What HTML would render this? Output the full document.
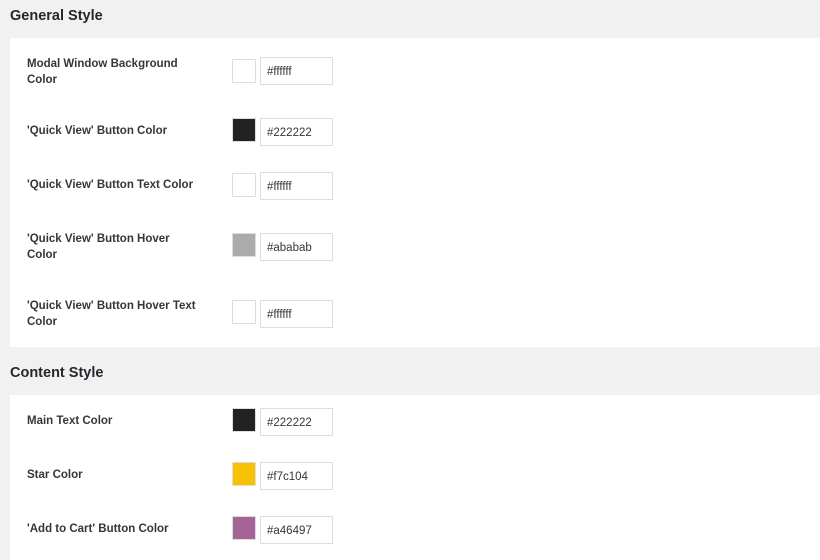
<!DOCTYPE html>
<html><head><style>
body{margin:0;width:820px;height:560px;background:#f1f1f1;font-family:"Liberation Sans",sans-serif;position:relative;overflow:hidden;color:#23282d}
.h{position:absolute;left:10px;font-size:14.5px;font-weight:bold;color:#23282d}
.p{position:absolute;left:10px;width:810px;background:#fff}
.l{position:absolute;left:27px;font-size:11.5px;font-weight:bold;line-height:16px;color:#32373c;white-space:nowrap}
.s{position:absolute;left:232px;width:22px;height:22px;border:1px solid #ddd}
.i{position:absolute;left:260px;border:1px solid #ddd;background:#fff;font-size:11.5px;line-height:28px;padding-left:6px;box-sizing:border-box;width:73px;height:28px;color:#32373c}
</style></head><body>
<div class="h" style="top:8px">General Style</div>
<div class="p" style="top:38px;height:309px"></div>
<div class="h" style="top:365px">Content Style</div>
<div class="p" style="top:395px;height:165px"></div>

<div class="l" style="top:56px">Modal Window Background<br>Color</div>
<div class="s" style="top:59px;background:#fff"></div><div class="i" style="top:57px">#ffffff</div>

<div class="l" style="top:123px">'Quick View' Button Color</div>
<div class="s" style="top:118px;background:#222"></div><div class="i" style="top:118px">#222222</div>

<div class="l" style="top:177px">'Quick View' Button Text Color</div>
<div class="s" style="top:173px;background:#fff"></div><div class="i" style="top:172px">#ffffff</div>

<div class="l" style="top:231px">'Quick View' Button Hover<br>Color</div>
<div class="s" style="top:233px;background:#ababab"></div><div class="i" style="top:233px">#ababab</div>

<div class="l" style="top:298px">'Quick View' Button Hover Text<br>Color</div>
<div class="s" style="top:300px;background:#fff"></div><div class="i" style="top:300px">#ffffff</div>

<div class="l" style="top:413px">Main Text Color</div>
<div class="s" style="top:408px;background:#222"></div><div class="i" style="top:408px">#222222</div>

<div class="l" style="top:467px">Star Color</div>
<div class="s" style="top:462px;background:#f7c104"></div><div class="i" style="top:462px">#f7c104</div>

<div class="l" style="top:521px">'Add to Cart' Button Color</div>
<div class="s" style="top:516px;background:#a46497"></div><div class="i" style="top:516px">#a46497</div>
</body></html>
